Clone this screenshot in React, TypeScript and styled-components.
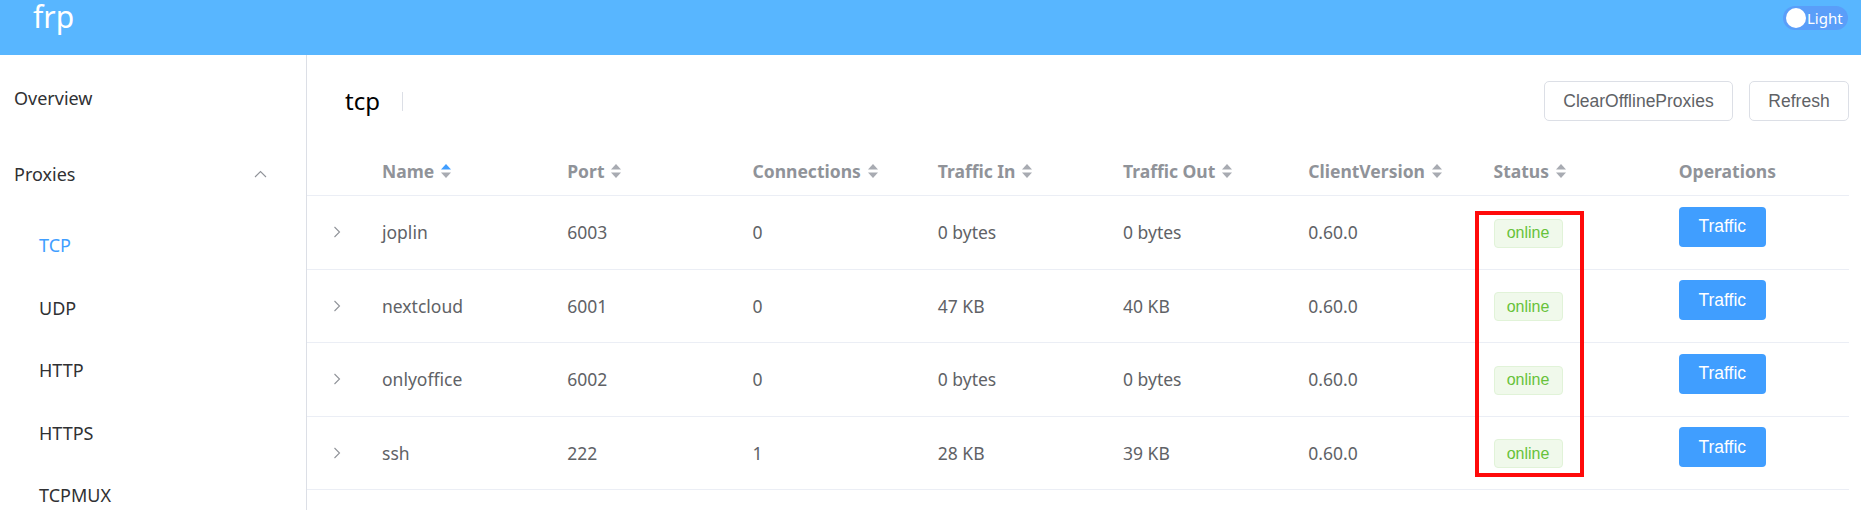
import React from "react";
import styled, { createGlobalStyle } from "styled-components";

const GlobalStyle = createGlobalStyle`
  html, body { margin: 0; padding: 0; overflow: hidden; background: #fff; }
  body { font-family: "Noto Sans", "Liberation Sans", Arial, sans-serif; }
  * { box-sizing: border-box; }
`;

const Page = styled.div`
  display: flex;
  flex-direction: column;
  height: 510px;
  overflow: hidden;
  position: relative;
`;

const TopBar = styled.header`
  height: 55px;
  flex: none;
  background: #58b6ff;
  display: flex;
  align-items: flex-start;
  justify-content: space-between;
  padding: 0 13px 0 33px;
`;

const Logo = styled.div`
  color: #fff;
  font-size: 30px;
  line-height: 34px;
  font-family: "Noto Sans", sans-serif;
`;

const ThemeSwitch = styled.div`
  margin-top: 6px;
  width: 65px;
  height: 24px;
  border-radius: 12px;
  background: #5a9ef9;
  display: flex;
  align-items: center;
  padding: 0 3px;
  gap: 1px;
`;

const Knob = styled.span`
  width: 20px;
  height: 20px;
  border-radius: 50%;
  background: #fff;
  flex: none;
`;

const SwitchLabel = styled.span`
  color: #fff;
  font-size: 15px;
  line-height: 20px;
`;

const Body = styled.div`
  flex: 1;
  display: flex;
  min-height: 0;
`;

const Sidebar = styled.nav`
  width: 307px;
  flex: none;
  border-right: 1px solid #dcdfe6;
  padding-top: 12px;
  display: flex;
  flex-direction: column;
`;

const MenuItem = styled.div<{ $sub?: boolean; $active?: boolean; $height?: number }>`
  height: ${(p) => p.$height ?? 62}px;
  flex: none;
  display: flex;
  align-items: center;
  justify-content: space-between;
  padding-left: ${(p) => (p.$sub ? 39 : 14)}px;
  padding-right: 39px;
  font-size: 18px;
  color: ${(p) => (p.$active ? "#409eff" : "#303133")};
`;

const SubMenu = styled.div`
  display: flex;
  flex-direction: column;
  padding-top: 9px;
`;

const Main = styled.main`
  flex: 1;
  min-width: 0;
  padding: 26px 12px 0 0;
  display: flex;
  flex-direction: column;
`;

const Toolbar = styled.div`
  height: 40px;
  display: flex;
  align-items: center;
  justify-content: space-between;
  padding-left: 38px;
`;

const TitleGroup = styled.div`
  display: flex;
  align-items: center;
  gap: 22px;
`;

const Title = styled.div`
  font-size: 24px;
  color: #000;
  line-height: 30px;
`;

const Divider = styled.span`
  width: 1px;
  height: 19px;
  background: #dcdfe6;
`;

const Actions = styled.div`
  display: flex;
  gap: 16px;
`;

const PlainButton = styled.button<{ $w: number }>`
  width: ${(p) => p.$w}px;
  height: 40px;
  border: 1px solid #dcdfe6;
  border-radius: 5px;
  background: #fff;
  color: #606266;
  font-family: "Liberation Sans", Arial, sans-serif;
  font-size: 17.5px;
  padding: 0;
`;

const Table = styled.div`
  margin-top: 25px;
  display: flex;
  flex-direction: column;
`;

const Row = styled.div<{ $head?: boolean }>`
  display: grid;
  grid-template-columns: 60px repeat(8, minmax(0, 1fr));
  height: ${(p) => (p.$head ? 50 : 73.5)}px;
  border-bottom: 1px solid #ebeef5;
  align-items: center;
`;

const HeadCell = styled.div`
  padding: 0 15px;
  display: flex;
  align-items: center;
  gap: 6px;
  font-weight: 700;
  font-size: 17.5px;
  color: #909399;
  white-space: nowrap;
`;

const Cell = styled.div`
  padding: 0 15px;
  display: flex;
  align-items: center;
  font-size: 17.5px;
  color: #606266;
  white-space: nowrap;
`;

const ExpandCell = styled.div`
  display: flex;
  justify-content: center;
  align-items: center;
`;

const Tag = styled.span`
  display: inline-flex;
  align-items: center;
  justify-content: center;
  width: 69px;
  height: 29px;
  border: 1px solid #e1f3d8;
  background: #f0f9eb;
  color: #67c23a;
  border-radius: 4px;
  font-family: "Liberation Sans", Arial, sans-serif;
  font-size: 16px;
  margin-top: 2px;
`;

const PrimaryButton = styled.button`
  width: 87px;
  height: 40px;
  border: none;
  border-radius: 4px;
  background: #409eff;
  color: #fff;
  font-family: "Liberation Sans", Arial, sans-serif;
  font-size: 17.5px;
  padding: 0;
  margin-bottom: 11px;
`;

const Highlight = styled.div`
  position: absolute;
  left: 1475px;
  top: 211px;
  width: 109px;
  height: 266px;
  border: 4px solid #ff0a0a;
  pointer-events: none;
`;

const SortIcon = ({ active }: { active?: boolean }) => (
  <svg width="12" height="16" viewBox="0 0 12 16">
    <path d="M1 6.5 L6 1 L11 6.5 Z" fill={active ? "#409eff" : "#a8abb2"} />
    <path d="M1 9.5 L6 15 L11 9.5 Z" fill="#a8abb2" />
  </svg>
);

const ChevronRight = () => (
  <svg width="8" height="12" viewBox="0 0 8 12">
    <path d="M1.5 1 L6.5 6 L1.5 11" fill="none" stroke="#909399" strokeWidth="1.1" />
  </svg>
);

const ChevronUp = () => (
  <svg width="13" height="8" viewBox="0 0 13 8">
    <path d="M1 7 L6.5 1.5 L12 7" fill="none" stroke="#909399" strokeWidth="1.1" />
  </svg>
);

const columns = [
  { label: "Name", sort: true, active: true },
  { label: "Port", sort: true },
  { label: "Connections", sort: true },
  { label: "Traffic In", sort: true },
  { label: "Traffic Out", sort: true },
  { label: "ClientVersion", sort: true },
  { label: "Status", sort: true },
  { label: "Operations", sort: false },
];

const rows = [
  { name: "joplin", port: "6003", conns: "0", tin: "0 bytes", tout: "0 bytes", ver: "0.60.0" },
  { name: "nextcloud", port: "6001", conns: "0", tin: "47 KB", tout: "40 KB", ver: "0.60.0" },
  { name: "onlyoffice", port: "6002", conns: "0", tin: "0 bytes", tout: "0 bytes", ver: "0.60.0" },
  { name: "ssh", port: "222", conns: "1", tin: "28 KB", tout: "39 KB", ver: "0.60.0" },
];

export default function App() {
  return (
    <Page>
      <GlobalStyle />
      <TopBar>
        <Logo>frp</Logo>
        <ThemeSwitch>
          <Knob />
          <SwitchLabel>Light</SwitchLabel>
        </ThemeSwitch>
      </TopBar>
      <Body>
        <Sidebar>
          <MenuItem>Overview</MenuItem>
          <MenuItem style={{ marginTop: 14 }}>
            Proxies
            <ChevronUp />
          </MenuItem>
          <SubMenu>
            <MenuItem $sub $active $height={62.5}>TCP</MenuItem>
            <MenuItem $sub $height={62.5}>UDP</MenuItem>
            <MenuItem $sub $height={62.5}>HTTP</MenuItem>
            <MenuItem $sub $height={62.5}>HTTPS</MenuItem>
            <MenuItem $sub $height={62.5}>TCPMUX</MenuItem>
          </SubMenu>
        </Sidebar>
        <Main>
          <Toolbar>
            <TitleGroup>
              <Title>tcp</Title>
              <Divider />
            </TitleGroup>
            <Actions>
              <PlainButton $w={189}>ClearOfflineProxies</PlainButton>
              <PlainButton $w={100}>Refresh</PlainButton>
            </Actions>
          </Toolbar>
          <Table>
            <Row $head>
              <div />
              {columns.map((c) => (
                <HeadCell key={c.label}>
                  {c.label}
                  {c.sort && <SortIcon active={c.active} />}
                </HeadCell>
              ))}
            </Row>
            {rows.map((r) => (
              <Row key={r.name}>
                <ExpandCell>
                  <ChevronRight />
                </ExpandCell>
                <Cell>{r.name}</Cell>
                <Cell>{r.port}</Cell>
                <Cell>{r.conns}</Cell>
                <Cell>{r.tin}</Cell>
                <Cell>{r.tout}</Cell>
                <Cell>{r.ver}</Cell>
                <Cell>
                  <Tag>online</Tag>
                </Cell>
                <Cell>
                  <PrimaryButton>Traffic</PrimaryButton>
                </Cell>
              </Row>
            ))}
          </Table>
        </Main>
      </Body>
      <Highlight />
    </Page>
  );
}
